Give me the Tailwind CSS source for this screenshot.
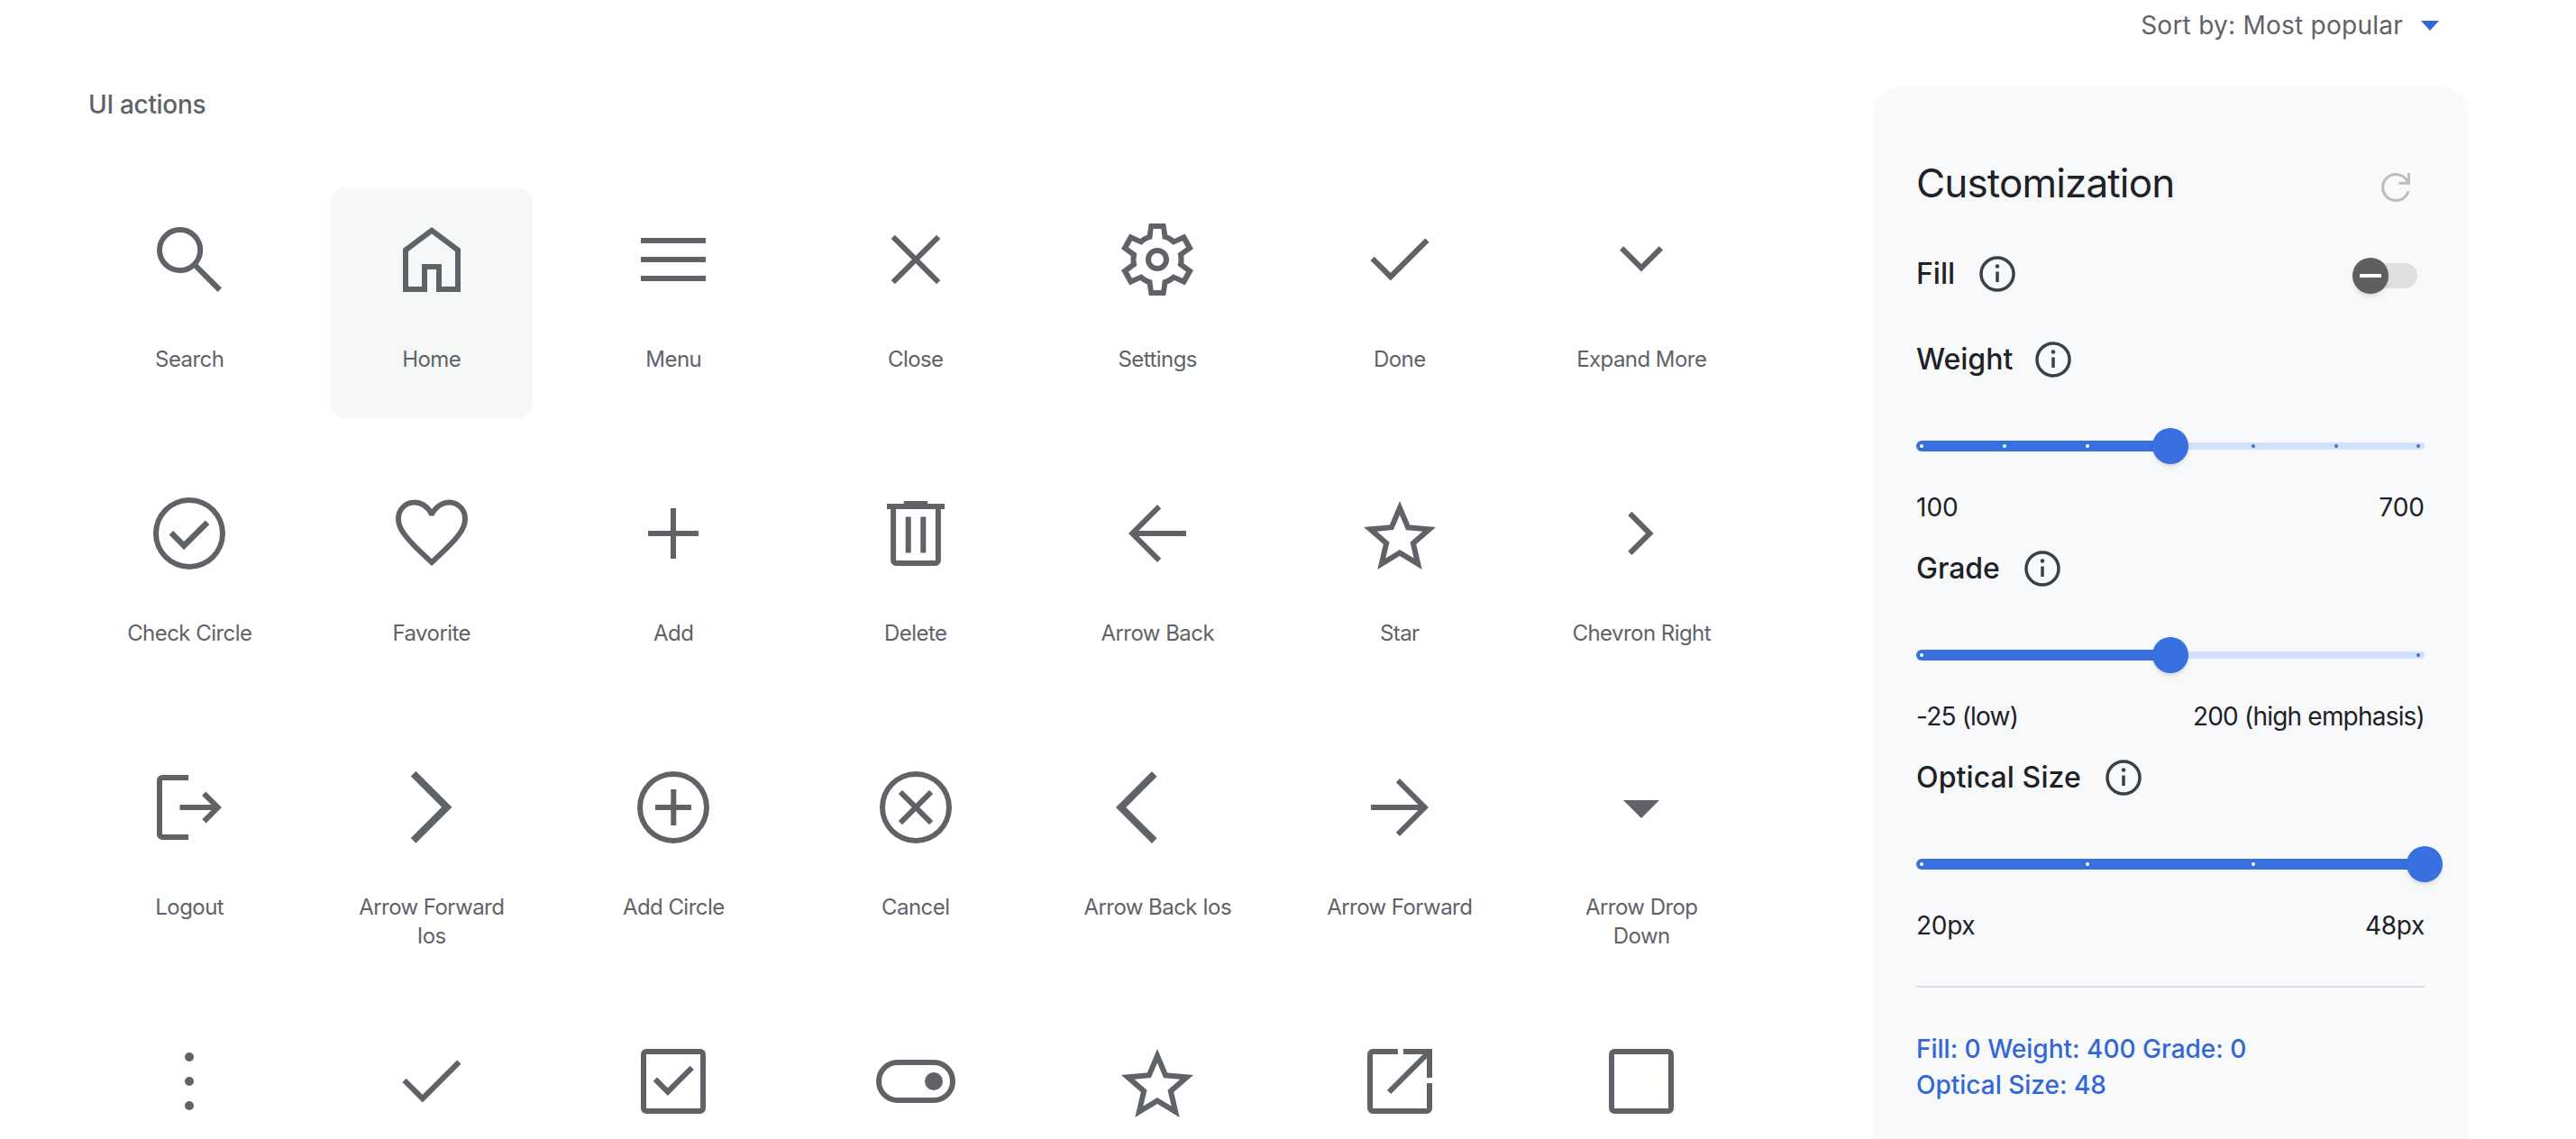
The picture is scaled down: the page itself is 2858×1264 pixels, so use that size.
<!DOCTYPE html>
<html><head><meta charset="utf-8">
<script src="https://cdn.jsdelivr.net/npm/@tailwindcss/browser@4"></script>
</head>
<body class="bg-white">
<div class="w-[2858px] h-[1264px] overflow-hidden bg-white font-['Inter','Liberation_Sans',sans-serif] text-[#5f6368]">
  <div class="h-[96px] flex justify-end items-start pr-[152px] pt-[10px]">
    <div class="flex items-center gap-[20px] h-[36px]">
      <span class="text-[28px] leading-[36px] tracking-[0.25px]">Sort by: Most popular</span>
      <svg class="w-[20px] h-[11px] fill-[#3367d6]" viewBox="0 0 20 11"><path d="M0 0h20L10 11Z"/></svg>
    </div>
  </div>
  <div class="flex items-start">
    <main class="w-[2078px] pl-[98px]">
      <h2 class="text-[28px] leading-[40px] font-medium tracking-[-0.3px]">UI actions</h2>
      <div class="mt-[72px] grid grid-cols-[repeat(7,224.5px)] auto-rows-[256px] gap-x-[44px] gap-y-[48px] text-center text-[24px] leading-[32px] tracking-[-0.55px] fill-[#5f6368]">
        <div class="pt-8 px-5 rounded-2xl"><svg class="w-24 h-24 mx-auto" viewBox="0 -960 960 960"><path d="M796-121 533-384q-30 26-69.959 40.5T378-329q-108.162 0-183.081-75Q120-479 120-585t75-181q75-75 181.5-75t181 75Q632-691 632-584.85 632-542 618-502q-14 40-42 75l264 262-44 44ZM377-389q81.25 0 138.125-57.5T572-585q0-81-56.875-138.5T377-781q-82.083 0-139.542 57.5Q180-666 180-585t57.458 138.5Q294.917-389 377-389Z"/></svg><p class="mt-[47px]">Search</p></div>
        <div class="pt-8 px-5 rounded-2xl bg-[#f6f8f8]"><svg class="w-24 h-24 mx-auto" viewBox="0 -960 960 960"><path d="M220-180h150v-250h220v250h150v-390L480-765 220-570v390Zm-60 60v-480l320-240 320 240v480H530v-250H430v250H160Z"/></svg><p class="mt-[47px]">Home</p></div>
        <div class="pt-8 px-5 rounded-2xl"><svg class="w-24 h-24 mx-auto" viewBox="0 -960 960 960"><path d="M120-240v-60h720v60H120Zm0-210v-60h720v60H120Zm0-210v-60h720v60H120Z"/></svg><p class="mt-[47px]">Menu</p></div>
        <div class="pt-8 px-5 rounded-2xl"><svg class="w-24 h-24 mx-auto" viewBox="0 -960 960 960"><path d="m249-207-42-42 231-231-231-231 42-42 231 231 231-231 42 42-231 231 231 231-42 42-231-231-231 231Z"/></svg><p class="mt-[47px]">Close</p></div>
        <div class="pt-8 px-5 rounded-2xl"><svg class="w-24 h-24 mx-auto" viewBox="0 -960 960 960"><path d="m388-80-20-126q-19-7-40-19t-37-25l-118 54-93-164 108-79q-2-9-2.5-20.5T185-480q0-9 .5-20.5T188-521L80-600l93-164 118 54q16-13 37-25t40-18l20-127h184l20 126q19 7 40.5 18.5T669-710l118-54 93 164-108 77q2 10 2.5 21.5t.5 21.5q0 10-.5 21t-2.5 21l108 78-93 164-118-54q-16 13-36.5 25.5T592-206L572-80H388Zm48-60h88l14-112q33-8 62.5-25t53.5-41l106 46 40-72-94-69q4-17 6.5-33.5T715-480q0-17-2-33.5t-7-33.5l94-69-40-72-106 46q-23-26-52-43.5T538-708l-14-112h-88l-14 112q-34 7-63.5 24T306-642l-106-46-40 72 94 69q-4 17-6.5 33.5T245-480q0 17 2.5 33.5T254-413l-94 69 40 72 106-46q24 24 53.5 41t62.5 25l14 112Zm44-210q54 0 92-38t38-92q0-54-38-92t-92-38q-54 0-92 38t-38 92q0 54 38 92t92 38Zm0-60q-29 0-49.5-20.5T410-480q0-29 20.5-49.5T480-550q29 0 49.5 20.5T550-480q0 29-20.5 49.5T480-410Z"/></svg><p class="mt-[47px]">Settings</p></div>
        <div class="pt-8 px-5 rounded-2xl"><svg class="w-24 h-24 mx-auto" viewBox="0 -960 960 960"><path d="M378-246 154-470l43-43 181 181 384-384 43 43-427 427Z"/></svg><p class="mt-[47px]">Done</p></div>
        <div class="pt-8 px-5 rounded-2xl"><svg class="w-24 h-24 mx-auto" viewBox="0 -960 960 960"><path d="M480-345 240-585l43-43 197 198 197-197 43 43-240 239Z"/></svg><p class="mt-[47px]">Expand More</p></div>

        <div class="pt-8 px-5 rounded-2xl"><svg class="w-24 h-24 mx-auto" viewBox="0 -960 960 960"><path d="m421-298 283-283-46-45-237 237-120-120-45 45 165 166Zm59 218q-82 0-155-31.5t-127.5-86Q143-252 111.5-325T80-480q0-83 31.5-156t86-127Q252-817 325-848.5T480-880q83 0 156 31.5T763-763q54 54 85.5 127T880-480q0 82-31.5 155T763-197.5q-54 54.5-127 86T480-80Zm0-60q142 0 241-99.5T820-480q0-142-99-241t-241-99q-141 0-240.5 99T140-480q0 141 99.5 240.5T480-140Z"/></svg><p class="mt-[47px]">Check Circle</p></div>
        <div class="pt-8 px-5 rounded-2xl"><svg class="w-24 h-24 mx-auto" viewBox="0 -960 960 960"><path d="m480-121-41-37q-105.768-97.121-174.884-167.561Q195-396 154-451.5T96.5-552Q80-597 80-643q0-90.155 60.5-150.577Q201-854 290-854q57 0 105.5 27t84.5 78q42-54 89-79.5T670-854q89 0 149.5 60.423Q880-733.155 880-643q0 46-16.5 91T806-451.5Q765-396 695.884-325.561 626.768-255.121 521-158l-41 37Zm0-79q101.236-92.995 166.618-159.498Q712-426 750.5-476t54-89.135q15.5-39.136 15.5-77.72Q820-709 778-751.5T670.225-794q-51.524 0-95.375 31.5Q531-731 504-674h-49q-26-56-69.85-88-43.851-32-95.375-32Q224-794 182-751.5t-42 108.816Q140-604 155.5-564.5t54 90Q248-424 314-358t166 158Z"/></svg><p class="mt-[47px]">Favorite</p></div>
        <div class="pt-8 px-5 rounded-2xl"><svg class="w-24 h-24 mx-auto" viewBox="0 -960 960 960"><path d="M450-200v-250H200v-60h250v-250h60v250h250v60H510v250h-60Z"/></svg><p class="mt-[47px]">Add</p></div>
        <div class="pt-8 px-5 rounded-2xl"><svg class="w-24 h-24 mx-auto" viewBox="0 -960 960 960"><path d="M261-120q-24.75 0-42.375-17.625T201-180v-570h-41v-60h188v-30h264v30h188v60h-41v570q0 24-18 42t-42 18H261Zm438-630H261v570h438v-570ZM367-266h60v-399h-60v399Zm166 0h60v-399h-60v399Z"/></svg><p class="mt-[47px]">Delete</p></div>
        <div class="pt-8 px-5 rounded-2xl"><svg class="w-24 h-24 mx-auto" viewBox="0 -960 960 960"><path d="M480-160 160-480l320-320 42 42-248 248h526v60H274l248 248-42 42Z"/></svg><p class="mt-[47px]">Arrow Back</p></div>
        <div class="pt-8 px-5 rounded-2xl"><svg class="w-24 h-24 mx-auto" viewBox="0 -960 960 960"><path d="m323-205 157-94 157 95-42-178 138-120-182-16-71-168-71 167-182 16 138 120-42 178Zm-90 125 65-281L80-550l288-25 112-265 112 265 288 25-218 189 65 281-247-149L233-80Z"/></svg><p class="mt-[47px]">Star</p></div>
        <div class="pt-8 px-5 rounded-2xl"><svg class="w-24 h-24 mx-auto" viewBox="0 -960 960 960"><path d="M530-481 332-679l43-43 241 241-241 241-43-43 198-198Z"/></svg><p class="mt-[47px]">Chevron Right</p></div>

        <div class="pt-8 px-5 rounded-2xl"><svg class="w-24 h-24 mx-auto" viewBox="0 -960 960 960"><path d="M180-120q-24 0-42-18t-18-42v-600q0-24 18-42t42-18h291v60H180v600h291v60H180Zm486-185-43-43 102-102H375v-60h348L621-612l43-43 176 176-174 174Z"/></svg><p class="mt-[47px]">Logout</p></div>
        <div class="pt-8 px-5 rounded-2xl"><svg class="w-24 h-24 mx-auto" viewBox="0 -960 960 960"><path d="m304-82-56-57 343-343-343-343 56-57 400 400-400 400Z"/></svg><p class="mt-[47px]">Arrow Forward Ios</p></div>
        <div class="pt-8 px-5 rounded-2xl"><svg class="w-24 h-24 mx-auto" viewBox="0 -960 960 960"><path d="M453-280h60v-170h167v-60H513v-170h-60v170H280v60h173v170Zm27 200q-82 0-155-31.5t-127.5-86Q143-252 111.5-325T80-480q0-83 31.5-156t86-127Q252-817 325-848.5T480-880q83 0 156 31.5T763-763q54 54 85.5 127T880-480q0 82-31.5 155T763-197.5q-54 54.5-127 86T480-80Zm0-60q142 0 241-99.5T820-480q0-142-99-241t-241-99q-141 0-240.5 99T140-480q0 141 99.5 240.5T480-140Z"/></svg><p class="mt-[47px]">Add Circle</p></div>
        <div class="pt-8 px-5 rounded-2xl"><svg class="w-24 h-24 mx-auto" viewBox="0 -960 960 960"><path d="m330-288 150-150 150 150 42-42-150-150 150-150-42-42-150 150-150-150-42 42 150 150-150 150 42 42Zm150 208q-82 0-155-31.5t-127.5-86Q143-252 111.5-325T80-480q0-83 31.5-156t86-127Q252-817 325-848.5T480-880q83 0 156 31.5T763-763q54 54 85.5 127T880-480q0 82-31.5 155T763-197.5q-54 54.5-127 86T480-80Zm0-60q142 0 241-99.5T820-480q0-142-99-241t-241-99q-141 0-240.5 99T140-480q0 141 99.5 240.5T480-140Z"/></svg><p class="mt-[47px]">Cancel</p></div>
        <div class="pt-8 px-5 rounded-2xl"><svg class="w-24 h-24 mx-auto" viewBox="0 -960 960 960"><path d="M420-80 20-480l400-400 56 57-343 343 343 343-56 57Z"/></svg><p class="mt-[47px]">Arrow Back Ios</p></div>
        <div class="pt-8 px-5 rounded-2xl"><svg class="w-24 h-24 mx-auto" viewBox="0 -960 960 960"><path d="m480-160-42-43 247-247H160v-60h525L438-757l42-43 320 320-320 320Z"/></svg><p class="mt-[47px]">Arrow Forward</p></div>
        <div class="pt-8 px-5 rounded-2xl"><svg class="w-24 h-24 mx-auto" viewBox="0 -960 960 960"><path d="M480-360 280-560h400L480-360Z"/></svg><p class="mt-[47px]">Arrow Drop Down</p></div>

        <div class="pt-8 px-5 rounded-2xl"><svg class="w-24 h-24 mx-auto" viewBox="0 -960 960 960"><circle cx="480" cy="-750" r="50"/><circle cx="480" cy="-480" r="50"/><circle cx="480" cy="-210" r="50"/></svg></div>
        <div class="pt-8 px-5 rounded-2xl"><svg class="w-24 h-24 mx-auto" viewBox="0 -960 960 960"><path d="M378-246 154-470l43-43 181 181 384-384 43 43-427 427Z"/></svg></div>
        <div class="pt-8 px-5 rounded-2xl"><svg class="w-24 h-24 mx-auto" viewBox="0 -960 960 960"><path d="m419-321 289-289-43-43-246 246-119-119-43 43 162 162ZM180-120q-24 0-42-18t-18-42v-600q0-24 18-42t42-18h600q24 0 42 18t18 42v600q0 24-18 42t-42 18H180Zm0-60h600v-600H180v600Z"/></svg></div>
        <div class="pt-8 px-5 rounded-2xl"><svg class="w-24 h-24 mx-auto" viewBox="0 -960 960 960"><path fill-rule="evenodd" d="M280-240q-100 0-170-70T40-480q0-100 70-170t170-70h400q100 0 170 70t70 170q0 100-70 170t-170 70H280Zm0-60h400q75 0 127.5-52.5T860-480q0-75-52.5-127.5T680-660H280q-75 0-127.5 52.5T100-480q0 75 52.5 127.5T280-300Z"/><circle cx="680" cy="-480" r="100"/></svg></div>
        <div class="pt-8 px-5 rounded-2xl"><svg class="w-24 h-24 mx-auto" viewBox="0 -960 960 960"><path d="m323-205 157-94 157 95-42-178 138-120-182-16-71-168-71 167-182 16 138 120-42 178Zm-90 125 65-281L80-550l288-25 112-265 112 265 288 25-218 189 65 281-247-149L233-80Z"/></svg></div>
        <div class="pt-8 px-5 rounded-2xl"><svg class="w-24 h-24 mx-auto" viewBox="0 -960 960 960"><path d="M180-120q-24 0-42-18t-18-42v-600q0-24 18-42t42-18h279v60H180v600h600v-279h60v279q0 24-18 42t-42 18H180Zm202-219-42-43 398-398H519v-60h321v321h-60v-219L382-339Z"/></svg></div>
        <div class="pt-8 px-5 rounded-2xl"><svg class="w-24 h-24 mx-auto" viewBox="0 -960 960 960"><path d="M180-120q-24 0-42-18t-18-42v-600q0-24 18-42t42-18h600q24 0 42 18t18 42v600q0 24-18 42t-42 18H180Zm0-60h600v-600H180v600Z"/></svg></div>
      </div>
    </main>

    <aside class="w-[660px] h-[1300px] rounded-t-[32px] bg-[#f8f9fb] px-[48px] pt-[75px] text-[#202124]">
      <div class="h-[64px] flex items-center justify-between">
        <h2 class="text-[44px] leading-[64px] font-normal tracking-[-0.85px]">Customization</h2>
        <svg class="w-12 h-12 mr-[8px] mt-[10px] fill-[#bdbdbd]" viewBox="0 -960 960 960"><path d="M480-160q-133 0-226.5-93.5T160-480q0-133 93.5-226.5T480-800q85 0 149 34.5T740-671v-129h60v254H546v-60h168q-38-60-97-97t-134-37q-109 0-184.5 75.5T224-480q0 109 75.5 184.5T484-220q83 0 152-47.5T728-393h62q-29 105-115 169t-195 64Z"/></svg>
      </div>
      <div class="mt-[45px] h-12 flex items-center gap-6 relative">
        <span class="text-[32px] leading-[48px] font-medium">Fill</span>
        <svg class="w-12 h-12 -ml-[1px] stroke-[#3c4043] fill-none" viewBox="0 0 48 48"><circle cx="24" cy="24" r="18" stroke-width="3.5"/><path d="M24 21.5V33" stroke-width="3.5"/><circle cx="24" cy="15.5" r="2.3" class="fill-[#3c4043] stroke-none"/></svg>
        <div class="absolute right-[8px] top-[12px] w-[67px] h-[28px] rounded-full bg-[#e0e0e0]"></div>
        <div class="absolute right-[40px] top-[6px] w-[40px] h-[40px] rounded-full bg-[#5f5f5f] shadow-md flex items-center justify-center"><div class="w-[24px] h-[4px] bg-white"></div></div>
      </div>

      <div class="mt-[47px] h-12 flex items-center gap-6">
        <span class="text-[32px] leading-[48px] font-medium">Weight</span>
        <svg class="w-12 h-12 -ml-[3px] stroke-[#3c4043] fill-none" viewBox="0 0 48 48"><circle cx="24" cy="24" r="18" stroke-width="3.5"/><path d="M24 21.5V33" stroke-width="3.5"/><circle cx="24" cy="15.5" r="2.3" class="fill-[#3c4043] stroke-none"/></svg>
      </div>
      <div class="mt-[52px] h-[40px] relative">
        <div class="absolute left-0 right-0 top-[16px] h-[8px] rounded-full bg-[#d3e0f9]"></div>
        <div class="absolute left-0 w-[282px] top-[14px] h-[12px] rounded-full bg-[#3870e0]"></div>
        <i class="absolute left-[4px] top-[18px] w-[4px] h-[4px] rounded-full bg-white"></i>
        <i class="absolute left-[96px] top-[18px] w-[4px] h-[4px] rounded-full bg-white"></i>
        <i class="absolute left-[188px] top-[18px] w-[4px] h-[4px] rounded-full bg-white"></i>
        <i class="absolute left-[372px] top-[18px] w-[4px] h-[4px] rounded-full bg-[#3870e0]"></i>
        <i class="absolute left-[464px] top-[18px] w-[4px] h-[4px] rounded-full bg-[#3870e0]"></i>
        <i class="absolute left-[555px] top-[18px] w-[4px] h-[4px] rounded-full bg-[#3870e0]"></i>
        <div class="absolute left-[262px] top-0 w-[40px] h-[40px] rounded-full bg-[#3870e0] shadow-md"></div>
      </div>
      <div class="mt-[28px] flex justify-between text-[28px] leading-[40px]"><span>100</span><span>700</span></div>

      <div class="mt-[24px] h-12 flex items-center gap-6">
        <span class="text-[32px] leading-[48px] font-medium">Grade</span>
        <svg class="w-12 h-12 -ml-[1px] stroke-[#3c4043] fill-none" viewBox="0 0 48 48"><circle cx="24" cy="24" r="18" stroke-width="3.5"/><path d="M24 21.5V33" stroke-width="3.5"/><circle cx="24" cy="15.5" r="2.3" class="fill-[#3c4043] stroke-none"/></svg>
      </div>
      <div class="mt-[52px] h-[40px] relative">
        <div class="absolute left-0 right-0 top-[16px] h-[8px] rounded-full bg-[#d3e0f9]"></div>
        <div class="absolute left-0 w-[282px] top-[14px] h-[12px] rounded-full bg-[#3870e0]"></div>
        <i class="absolute left-[4px] top-[18px] w-[4px] h-[4px] rounded-full bg-white"></i>
        <i class="absolute left-[555px] top-[18px] w-[4px] h-[4px] rounded-full bg-[#3870e0]"></i>
        <div class="absolute left-[262px] top-0 w-[40px] h-[40px] rounded-full bg-[#3870e0] shadow-md"></div>
      </div>
      <div class="mt-[28px] flex justify-between text-[28px] leading-[40px] tracking-[-0.8px]"><span>-25 (low)</span><span>200 (high emphasis)</span></div>

      <div class="mt-[24px] h-12 flex items-center gap-6">
        <span class="text-[32px] leading-[48px] font-medium tracking-[0.1px]">Optical Size</span>
        <svg class="w-12 h-12 -ml-[1px] stroke-[#3c4043] fill-none" viewBox="0 0 48 48"><circle cx="24" cy="24" r="18" stroke-width="3.5"/><path d="M24 21.5V33" stroke-width="3.5"/><circle cx="24" cy="15.5" r="2.3" class="fill-[#3c4043] stroke-none"/></svg>
      </div>
      <div class="mt-[52px] h-[40px] relative">
        <div class="absolute left-0 right-0 top-[14px] h-[12px] rounded-full bg-[#3870e0]"></div>
        <i class="absolute left-[4px] top-[18px] w-[4px] h-[4px] rounded-full bg-white"></i>
        <i class="absolute left-[188px] top-[18px] w-[4px] h-[4px] rounded-full bg-white"></i>
        <i class="absolute left-[372px] top-[18px] w-[4px] h-[4px] rounded-full bg-white"></i>
        <div class="absolute left-[544px] top-0 w-[40px] h-[40px] rounded-full bg-[#3870e0] shadow-md"></div>
      </div>
      <div class="mt-[28px] flex justify-between text-[28px] leading-[40px] tracking-[-0.3px]"><span>20px</span><span>48px</span></div>

      <div class="mt-[47px] h-[2px] bg-[#dadce0]"></div>
      <p class="mt-[48px] w-[400px] text-[28px] leading-[40px] font-medium text-[#3367d6]">Fill: 0 Weight: 400 Grade: 0 Optical Size: 48</p>
    </aside>
  </div>
</div>
</body></html>
